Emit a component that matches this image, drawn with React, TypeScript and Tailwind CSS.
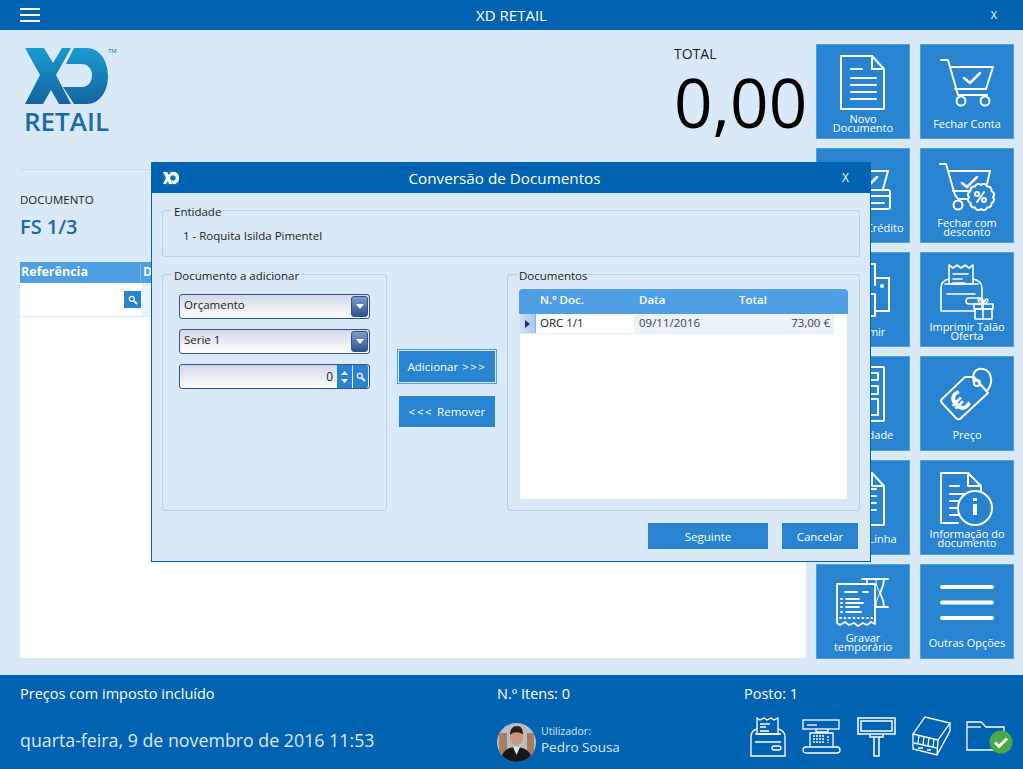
import React from 'react';

const Stroke: React.FC<{ children: React.ReactNode; w?: number }> = ({ children, w = 2 }) => (
  <svg width="94" height="68" viewBox="0 0 94 68" fill="none" stroke="white" strokeWidth={w} strokeLinejoin="round" strokeLinecap="round">
    {children}
  </svg>
);

// wavy badge on the discount cart
const badge = (() => {
  let d = '';
  for (let i = 0; i < 12; i++) {
    const a = (i * Math.PI) / 6;
    const x = (61 + 12 * Math.cos(a)).toFixed(1);
    const y = (48 + 12 * Math.sin(a)).toFixed(1);
    d += i === 0 ? `M${x} ${y}` : `A3.6 3.6 0 0 1 ${x} ${y}`;
  }
  return d + `A3.6 3.6 0 0 1 73 48z`;
})();

const icons: Record<string, React.ReactNode> = {
  doc: (
    <Stroke>
      <path d="M25 11h31l12 13v40H25z" />
      <path d="M56 11v13h12" />
      <path d="M35 24h11M35 33h25M35 40h25M35 47h25M35 54h25" />
    </Stroke>
  ),
  cart: (
    <Stroke>
      <path d="M21 15h7l10 35h29M30 22h43l-7 22H35" />
      <circle cx="41" cy="56" r="4.5" />
      <circle cx="65" cy="56" r="4.5" />
      <path d="M44 33l6 5 10-10" strokeWidth={2.5} />
    </Stroke>
  ),
  card: (
    <Stroke>
      <path d="M21 15h7l9 30M30 22h42l-5 18" />
      <path d="M45 33l6 5 10-10" strokeWidth={2.5} />
      <rect x="40" y="41" width="34" height="19" rx="2" />
      <path d="M41 47h32M50 54h18" />
    </Stroke>
  ),
  discount: (
    <Stroke>
      <path d="M20 15h6l9 31 3 4h10M28 22h42l-3 13M33 42h17" />
      <circle cx="38" cy="56" r="4.5" />
      <path d="M42 34l5 4 10-10" strokeWidth={2.5} />
      <path d={badge} fill="#2884d0" />
      <path d="M57 53l7-10" />
      <circle cx="57" cy="45" r="2" />
      <circle cx="64" cy="51" r="2" />
    </Stroke>
  ),
  printer: (
    <Stroke>
      <path d="M38 32V11h21v21" />
      <path d="M38 25H30v22h8M59 25h14v33H59" />
      <rect x="38" y="41" width="21" height="22" />
      <path d="M44 48h8M44 55h8" />
      <circle cx="66" cy="33" r="1" />
    </Stroke>
  ),
  receipt: (
    <Stroke w={1.6}>
      <path d="M29 31V12l4 3 4-3 4 3 4-3 4 3 4-3v19z" />
      <path d="M33 21h15M33 26h9M33 30h12" />
      <path d="M29 26c-5 1-8 4-8 9v23h41V35c0-5-4-8-9-9" />
      <path d="M25 31h33M27 41h28" />
      <rect x="46" y="45" width="17" height="6" rx="3" fill="#2884d0" />
      <rect x="55" y="56" width="17" height="10" fill="#2884d0" />
      <path d="M54 56h19v-5H54zM63 51v15M61 51c-6-5-1-8 2 0 3-8 8-5 2 0" />
    </Stroke>
  ),
  qty: (
    <Stroke>
      <rect x="30" y="10" width="38" height="54" rx="1" />
      <path d="M38 16h24v7H38zM38 29h24v8H38zM38 42h24v16H38z" />
    </Stroke>
  ),
  tag: (
    <Stroke>
      <path d="M45 20h9l14 16-28 26q-2 1-4-1L22 46q-2-2 0-4z" />
      <circle cx="57" cy="26" r="3" />
      <path d="M54 26c-2-8 0-13 5-14 6-1 11 2 12 9 1 5-1 9-4 13" />
      <text x="0" y="0" transform="translate(46 52) rotate(-45)" fill="white" stroke="none" fontSize="28" fontWeight="700" textAnchor="middle">€</text>
    </Stroke>
  ),
  line: (
    <Stroke>
      <path d="M30 12h26l12 13v39H30z" />
      <path d="M56 12v13h12" />
      <path d="M38 28h22M38 35h22M38 42h22M38 49h22" />
    </Stroke>
  ),
  info: (
    <Stroke>
      <path d="M38 62H21V12h27l13 13v7" />
      <path d="M48 12v13h13" />
      <path d="M30 25h9M30 33h20M30 40h12M30 47h9M30 54h9" />
      <circle cx="55" cy="47" r="17" fill="#2884d0" />
      <path d="M55 43v11" strokeWidth={4} strokeLinecap="butt" />
      <path d="M55 37v3" strokeWidth={4} strokeLinecap="butt" />
    </Stroke>
  ),
  temp: (
    <Stroke w={1.8}>
      <path d="M46 14h26M59 42h13M51 14v6M68 14c0 7-2 10-4 14 2 4 4 7 4 14" />
      <path d="M60 14c0 7 2 10 4 14-2 4-4 7-4 14" strokeWidth={1} />
      <path d="M21 19h38v40l-4-2-4 3-4-2-5 3-4-3-5 2-4-3-5 3-3-2z" fill="#2884d0" />
      <path d="M29 27h12M47 27h5M30 34h13M30 38h17M30 42h13M30 47h15" />
      <path d="M25 34h1M25 38h1M25 42h1M25 47h1" />
      <path d="M24 53h32" strokeDasharray="1 3.500" />
    </Stroke>
  ),
  menu: (
    <Stroke w={4}>
      <path d="M22 22h50M22 37.5h50M22 53h50" />
    </Stroke>
  ),
};

const Tile: React.FC<{ icon: string; label: string[]; low?: boolean }> = ({ icon, label, low }) => (
  <div className="w-[94px] h-[95px] bg-[#2884d0] border border-[#4f9fe4] flex flex-col items-center text-white">
    <div className={low ? 'h-[65px] w-[94px] shrink-0 flex justify-center' : 'h-[66px] w-[94px] shrink-0 flex justify-center'}>{icons[icon]}</div>
    <div className="h-[24px] flex flex-col items-center justify-center text-[11px] leading-[9px] whitespace-nowrap">
      {label.map((l) => (
        <span key={l}>{l}</span>
      ))}
    </div>
  </div>
);

const tiles = [
  { icon: 'doc', label: ['Novo', 'Documento'] },
  { icon: 'cart', label: ['Fechar Conta'] },
  { icon: 'card', label: ['Nota de Crédito'] },
  { icon: 'discount', label: ['Fechar com', 'desconto'] },
  { icon: 'printer', label: ['Imprimir'] },
  { icon: 'receipt', label: ['Imprimir Talão', 'Oferta'] },
  { icon: 'qty', label: ['Quantidade'] },
  { icon: 'tag', label: ['Preço'] },
  { icon: 'line', label: ['Apagar Linha'] },
  { icon: 'info', label: ['Informação do', 'documento'] },
  { icon: 'temp', label: ['Gravar', 'temporário'] },
  { icon: 'menu', label: ['Outras Opções'] },
];

const Logo = () => (
  <svg width="84" height="57" viewBox="0 0 84 57" className="block">
    <defs>
      <linearGradient id="xd" x1="0" y1="0" x2="0" y2="1">
        <stop offset="0" stopColor="#1a9bd0" />
        <stop offset="1" stopColor="#14649f" />
      </linearGradient>
    </defs>
    <path d="M0 0H19L28 15L37 0H46L31 27L46 56H34L26 42L18 56H0L15 27z" fill="url(#xd)" />
    <path d="M49 0H62C74 0 83 12 83 28C83 44 74 56 62 56H49L38 39H57C63 39 67 34 67 27C67 21 63 16 57 16H41z" fill="url(#xd)" />
  </svg>
);

const SmallLogo = () => (
  <svg width="16" height="15" viewBox="0 0 16 15" className="block">
    <rect width="16" height="15" fill="#0a6fb0" />
    <path d="M0 1h4l2 3 2-3h2L7 7l3 6H6L5 10l-2 3H0l3-6z" fill="white" />
    <path d="M9 1h2c3 0 5 2.500 5 6s-2 6-5 6h-1L8.500 9.500H11c1 0 1.700-1 1.700-2.500S12 4.500 11 4.500H8.500L8 4z" fill="white" />
  </svg>
);

const Search = ({ size = 10 }: { size?: number }) => (
  <svg width={size} height={size} viewBox="0 0 10 10" fill="none" stroke="white">
    <circle cx="3.800" cy="3.800" r="2.500" strokeWidth="1.200" />
    <path d="M5.800 5.800L9 9" strokeWidth="1.800" />
  </svg>
);

const Combo: React.FC<{ text: string }> = ({ text }) => (
  <div className="h-[25px] w-[191px] rounded-[3px] border border-[#35508f] bg-gradient-to-b from-[#d3d7e8] to-white flex items-center justify-between pl-1 pr-[1px]">
    <span className="text-[11.500px] pb-[3px]">{text}</span>
    <div className="w-[17px] h-[21px] rounded-[3px] bg-gradient-to-b from-[#7f9cc9] to-[#2f5590] border border-[#30508a] flex items-center justify-center">
      <svg width="8" height="5" viewBox="0 0 8 5"><path d="M0 0h8L4 5z" fill="white" /></svg>
    </div>
  </div>
);

const Footer = () => (
  <div className="h-[94px] bg-[#0063b1] text-white grid grid-cols-[477px_247px_1fr] grid-rows-[38px_56px] pl-5">
    <div className="text-[14.500px] flex items-center">Preços com imposto incluído</div>
    <div className="text-[14.500px] flex items-center">N.º Itens: 0</div>
    <div className="text-[14.500px] flex items-center">Posto: 1</div>
    <div className="text-[17.800px] pt-[14px] text-[#d9e9f8] whitespace-nowrap">quarta-feira, 9 de novembro de 2016 11:53</div>
    <div className="flex items-start pt-[10px]">
      <svg width="39" height="39" viewBox="0 0 39 39" className="shrink-0">
        <defs>
          <clipPath id="av"><circle cx="19.500" cy="19.500" r="19.500" /></clipPath>
        </defs>
        <g clipPath="url(#av)">
          <rect width="39" height="39" fill="#b8bcc0" />
          <rect x="2" y="10" width="8" height="22" fill="#a9805f" />
          <rect x="30" y="10" width="7" height="22" fill="#a67c60" />
          <path d="M4 39c0-10 6-15 15-15s16 5 16 15z" fill="#16181c" />
          <path d="M16 24l3.500 8 3.500-8z" fill="#e8e4df" />
          <ellipse cx="19.500" cy="14" rx="6.500" ry="8.500" fill="#c99679" />
          <path d="M13 12c0-6 3-9 7-9s6 3 6 9c-2-3-9-4-13 0z" fill="#2a1d16" />
        </g>
      </svg>
      <div className="ml-[5px] flex flex-col mt-[1px] whitespace-nowrap">
        <span className="text-[10.500px] leading-[14px] text-[#d9e9f8]">Utilizador:</span>
        <span className="text-[13.500px] leading-[18px] text-[#d9e9f8]">Pedro Sousa</span>
      </div>
    </div>
    <div className="flex pl-[6px] pt-[3px] items-start">
      <svg width="36" height="41" viewBox="0 0 36 41" fill="none" stroke="white" strokeWidth="1.300" className="shrink-0 mt-[1px]">
        <path d="M7 17V1l3 2 4-2 3 2 4-2 3 2 4-2v16z" />
        <path d="M10 7h10M10 10h6M10 14h9" />
        <path d="M7 12c-4 1-6 4-6 8v19h34V20c0-4-3-7-7-8" />
        <path d="M5 17h26M5 25h26" />
        <rect x="22" y="29" width="9" height="4" rx="2" />
      </svg>
      <svg width="39" height="36" viewBox="0 0 39 36" fill="none" stroke="white" strokeWidth="1.300" className="shrink-0 ml-[16px] mt-[3px]">
        <rect x="1" y="1" width="36" height="9" />
        <path d="M5 6h10" />
        <path d="M14 10v3h12v-3M8 28V14h23v14" />
        <path d="M11 17h12M11 20h12M11 23h12M26 17v7" strokeDasharray="2 1" />
        <rect x="1" y="28" width="37" height="6" rx="3" />
      </svg>
      <svg width="39" height="40" viewBox="0 0 39 40" fill="none" stroke="white" strokeWidth="1.500" className="shrink-0 ml-[16px] mt-[1px]">
        <rect x="1" y="1" width="37" height="16" />
        <rect x="4" y="4" width="31" height="10" />
        <path d="M13 17v3h13v-3M17 20v19h5V20" />
      </svg>
      <svg width="39" height="40" viewBox="0 0 39 40" fill="none" stroke="white" strokeWidth="1.300" className="shrink-0 ml-[16px]">
        <path d="M1 18L13 1l25 6-12 17z" />
        <path d="M38 7v8L25 39" />
        <path d="M1 18v15l24 6 1-15" />
        <path d="M2 27l23 5M7 19l-1 8M12 20l-1 9M17 21l-1 9M22 23l-1 8" />
        <path d="M6 32h5M15 34h4" />
      </svg>
      <div className="relative w-[40px] h-[42px] ml-[15px] mt-[4px] shrink-0">
        <svg width="40" height="32" viewBox="0 0 40 32" fill="none" stroke="white" strokeWidth="1.300">
          <path d="M1 30V2h14l5 5h18v23z" />
          <path d="M1 7h14" />
        </svg>
        <svg width="24" height="24" viewBox="0 0 24 24" className="absolute left-[23px] top-[10px]">
          <circle cx="12" cy="12" r="11.500" fill="#4aa84a" />
          <path d="M6 12.500l4 4 8-8" fill="none" stroke="white" strokeWidth="3" />
        </svg>
      </div>
    </div>
  </div>
);

const Dialog = () => (
  <div className="absolute left-[151px] top-[162px] w-[720px] h-[400px] bg-[#d9e9f8] border border-[#0063b1] flex flex-col text-[#1b1b1b]">
    <div className="h-[30px] bg-[#0063b1] text-white grid grid-cols-[1fr_auto_1fr] items-center pl-[11px] pr-[21px] shrink-0">
      <SmallLogo />
      <span className="text-[15.250px] -ml-[3px]">Conversão de Documentos</span>
      <span className="text-[12px] justify-self-end">X</span>
    </div>
    <div className="flex flex-col px-[10px] pt-[12px] flex-1">
      <fieldset className="h-[52px] border border-[#bccfe0] rounded-[3px] px-[9px] w-[698px]">
        <legend className="px-[2px] text-[11.500px] h-[10px] leading-[14px]">Entidade</legend>
        <div className="text-[11.500px] leading-[20px] pl-[11px] pt-[11px]">1 - Roquita Isilda Pimentel</div>
      </fieldset>
      <div className="flex mt-[12px] h-[242px]">
        <fieldset className="w-[225px] border border-[#bccfe0] rounded-[3px] px-[9px] pt-[15px] shrink-0">
          <legend className="px-[2px] text-[11.500px] h-[10px] leading-[14px]">Documento a adicionar</legend>
          <div className="pl-[7px] flex flex-col gap-[10px]">
            <Combo text="Orçamento" />
            <Combo text="Serie 1" />
            <div className="h-[25px] w-[191px] rounded-[3px] border border-[#35508f] bg-gradient-to-b from-[#d3d7e8] to-white flex items-center justify-end pr-[1px]">
              <span className="text-[12px] mr-[4px]">0</span>
              <div className="w-[15px] h-[23px] bg-[#2884d0] flex flex-col items-center justify-center gap-[4px]">
                <svg width="7" height="4" viewBox="0 0 7 4"><path d="M0 4h7L3.500 0z" fill="white" /></svg>
                <svg width="7" height="4" viewBox="0 0 7 4"><path d="M0 0h7L3.500 4z" fill="white" /></svg>
              </div>
              <div className="ml-[1px] w-[15px] h-[23px] bg-[#2884d0] rounded-r-[2px] flex items-center justify-center">
                <Search />
              </div>
            </div>
          </div>
        </fieldset>
        <div className="w-[120px] shrink-0 flex flex-col items-center pt-[80px] text-white text-[11.500px]">
          <div className="w-[100px] h-[35px] bg-[#2884d0] border-2 border-[#d9e9f8] outline outline-1 outline-[#4f9fe4] -outline-offset-1 flex items-center justify-center">Adicionar <span className="ml-[4px] tracking-[1.500px]">&gt;&gt;&gt;</span></div>
          <div className="w-[96px] h-[31px] bg-[#2884d0] mt-[12px] flex items-center justify-center"><span className="mr-[4px] tracking-[1.500px]">&lt;&lt;&lt;</span> Remover</div>
        </div>
        <fieldset className="w-[353px] border border-[#bccfe0] rounded-[3px] px-[11px] pt-[10px] shrink-0">
          <legend className="-ml-[1px] px-[1px] text-[11.500px] h-[10px] leading-[14px]">Documentos</legend>
          <div className="w-[329px] h-[210px] flex flex-col">
            <div className="h-[25px] bg-[#4f9fe4] rounded-t-[4px] text-white text-[11.500px] font-semibold flex items-center pb-[3px] shrink-0">
              <span className="w-[120px] pl-[21px]">N.º Doc.</span>
              <span className="w-[100px]">Data</span>
              <span>Total</span>
            </div>
            <div className="mx-[1px] flex-1 bg-white">
              <div className="h-[20px] w-[314px] flex text-[11.500px] border-b border-[#e4edf5]">
                <div className="w-[16px] bg-gradient-to-r from-[#cfe0f6] to-[#a9c8ee] border-r border-[#8fb2e0] flex items-center justify-center">
                  <svg width="5" height="8" viewBox="0 0 5 8"><path d="M0 0l5 4-5 4z" fill="#1c2f5c" /></svg>
                </div>
                <div className="w-[98px] pl-[4px] leading-[18px] bg-white">ORC 1/1</div>
                <div className="flex-1 bg-[#e9f2fb] flex justify-between pl-[5px] pr-[4px] leading-[18px] text-[#444]">
                  <span>09/11/2016</span>
                  <span>73,00 €</span>
                </div>
              </div>
            </div>
          </div>
        </fieldset>
      </div>
      <div className="flex justify-end gap-[14px] mt-[12px] pr-[2px] text-white text-[11.500px]">
        <div className="w-[120px] h-[26px] bg-[#2884d0] flex items-center justify-center pt-[1px]">Seguinte</div>
        <div className="w-[76px] h-[26px] bg-[#2884d0] flex items-center justify-center pt-[1px]">Cancelar</div>
      </div>
    </div>
  </div>
);

export default function App() {
  return (
    <div className="relative w-[1023px] h-[769px] overflow-hidden bg-[#d9e9f8] flex flex-col font-['Open_Sans',sans-serif] text-[#1b1b1b]">
      <div className="h-[30px] bg-[#0063b1] text-white grid grid-cols-[1fr_auto_1fr] items-center pl-5 pr-[26px] shrink-0">
        <svg width="20" height="14" viewBox="0 0 20 14" stroke="white" strokeWidth="2"><path d="M0 1h20M0 7h20M0 13h20" /></svg>
        <span className="text-[15px] ml-[6px]">XD RETAIL</span>
        <span className="text-[11px] justify-self-end">X</span>
      </div>

      <div className="flex flex-1 min-h-0">
        <div className="w-[786px] ml-5 shrink-0 flex flex-col pb-[17px]">
          <div className="h-[140px] shrink-0 border-b border-[#c9dcec] flex justify-between">
            <div className="pl-[5px] pt-[18px] relative">
              <Logo />
              <span className="absolute left-[88px] top-[17px] text-[6px] text-[#1a69a8]">TM</span>
              <div className="text-[26px] font-semibold leading-[30px] text-[#1a69a8] mt-[1px] -ml-[1px]">RETAIL</div>
            </div>
            <div className="w-[132px] pt-[14px]">
              <div className="text-[14px] leading-[20px]">TOTAL</div>
              <div className="text-[67.500px] leading-[62px] text-black text-right whitespace-nowrap mt-[7px]">0,00</div>
            </div>
          </div>
          <div className="text-[11.500px] leading-[16px] mt-[22px]">DOCUMENTO</div>
          <div className="text-[20px] leading-[28px] font-semibold text-[#1a69a8] mt-[5px]">FS 1/3</div>
          <div className="flex-1 min-h-0 bg-white mt-[21px] flex flex-col">
            <div className="h-[21px] bg-[#4f9fe4] text-white text-[12.500px] font-bold flex items-center shrink-0">
              <span className="w-[121px] pl-[1px] border-r border-[#7fb8ea]">Referência</span>
              <span className="pl-[2px]">D</span>
            </div>
            <div className="h-[34px] flex border-b border-[#e4edf5] shrink-0">
              <div className="w-[122px] flex justify-end pt-[8px] pr-[1px]">
                <div className="w-[17px] h-[17px] bg-[#2884d0] flex items-center justify-center"><Search /></div>
              </div>
              <div className="flex-1 bg-[#eaf3fb]" />
            </div>
          </div>
        </div>

        <div className="grid grid-cols-[94px_94px] gap-x-[10px] gap-y-[9px] ml-[10px] pt-[14px] content-start">
          {tiles.map((t, i) => (
            <Tile key={t.icon} icon={t.icon} label={t.label} low={i >= 6} />
          ))}
        </div>
      </div>

      <Footer />
      <Dialog />
    </div>
  );
}
